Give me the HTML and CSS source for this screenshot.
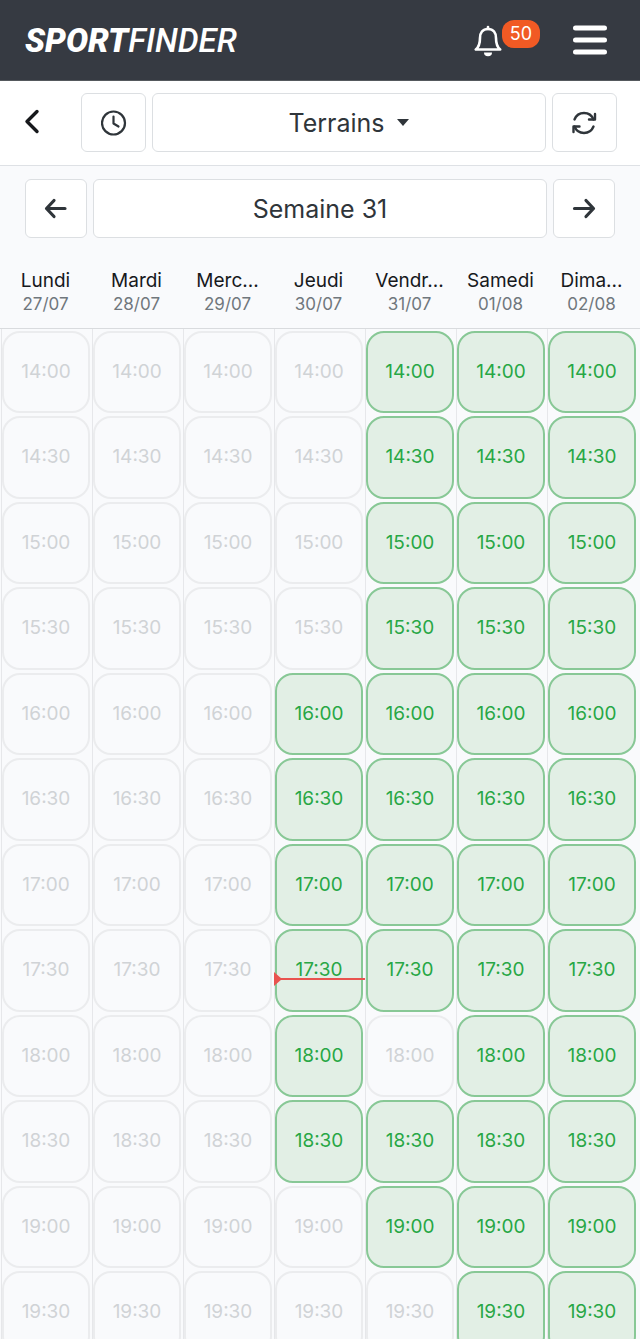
FILE: index.html
```html
<!DOCTYPE html>
<html lang="fr">
<head>
  <meta charset="UTF-8">
  <meta name="viewport" content="width=device-width, initial-scale=1.0">
  <title>SportFinder</title>
  <link rel="stylesheet" href="styles.css">
</head>
<body>
  <header class="navbar">
    <a href="#" class="logo"><strong>SPORT</strong>FINDER</a>
    <div class="navbar-actions">
      <button type="button" class="bell-btn" aria-label="Notifications">
        <svg width="28" height="32" viewBox="0 0 28 32" fill="none" stroke="#fff" stroke-width="2.6" stroke-linecap="round" stroke-linejoin="round">
          <path d="M14 4C8.500 4 6 8 6 13C6 18 5 22 1.800 24.500H26.200C23 22 22 18 22 13C22 8 19.500 4 14 4Z"/>
          <path d="M14 2V4"/>
          <path d="M10 27.500H18A4 3.800 0 0 1 10 27.500Z" fill="#fff" stroke="none"/>
        </svg>
        <span class="badge">50</span>
      </button>
      <button type="button" class="menu-btn" aria-label="Menu">
        <svg width="36" height="32" viewBox="0 0 36 32" stroke="#fff" stroke-width="5" stroke-linecap="round">
          <path d="M3.500 4H32.500M3.500 16H32.500M3.500 28H32.500"/>
        </svg>
      </button>
    </div>
  </header>

  <div class="toolbar">
    <a href="#" class="back-link" aria-label="Retour">
      <svg width="16" height="28" viewBox="0 0 16 28" fill="none" stroke="#17191c" stroke-width="3.400" stroke-linecap="round" stroke-linejoin="round">
        <path d="M13 2.500L3 12.500L13 22.500"/>
      </svg>
    </a>
    <button type="button" class="box icon-box" aria-label="Horaires">
      <svg width="26" height="26" viewBox="0 0 26 26" fill="none" stroke="#2f353a" stroke-width="2.200" stroke-linecap="round" stroke-linejoin="round">
        <circle cx="12.500" cy="13" r="11.500"/>
        <path d="M12.500 6.500V13.500L17.500 16.500"/>
      </svg>
    </button>
    <select class="box courts" aria-label="Terrains">
      <option>Terrains</option>
    </select>
    <button type="button" class="box icon-box" aria-label="Actualiser">
      <svg width="26" height="26" viewBox="0 0 26 26" fill="none" stroke="#2f353a" stroke-width="2.400" stroke-linecap="round" stroke-linejoin="round">
        <path d="M2.500 9.500A10.200 10.200 0 0 1 21.500 9.500"/>
        <path d="M23 4V9.500H17"/>
        <path d="M21.500 16.500A10.200 10.200 0 0 1 2.500 16.500"/>
        <path d="M1.500 22V16.500H7.500"/>
      </svg>
    </button>
  </div>

  <main class="calendar">
    <div class="week-nav">
      <button type="button" class="box icon-box" aria-label="Semaine précédente">
        <svg width="24" height="24" viewBox="0 0 24 24" fill="none" stroke="#2f353a" stroke-width="3.200" stroke-linecap="round" stroke-linejoin="round">
          <path d="M21 11.500H2.500M10 3.500L2.500 11.500L10 19.500"/>
        </svg>
      </button>
      <button type="button" class="box week">Semaine 31</button>
      <button type="button" class="box icon-box" aria-label="Semaine suivante">
        <svg width="24" height="24" viewBox="0 0 24 24" fill="none" stroke="#2f353a" stroke-width="3.200" stroke-linecap="round" stroke-linejoin="round">
          <path d="M2.500 11.500H21.500M14 3.500L21.500 11.500L14 19.500"/>
        </svg>
      </button>
    </div>
    <div class="days" id="days"></div>
    <div class="slots" id="slots"></div>
  </main>

  <script>
    // first: first free half hour of the day, last: last one, full: booked in between
    const days = [
      { name: 'Lundi', date: '27/07' },
      { name: 'Mardi', date: '28/07' },
      { name: 'Merc...', date: '29/07' },
      { name: 'Jeudi', date: '30/07', first: 4, last: 9 },
      { name: 'Vendr...', date: '31/07', first: 0, last: 10, full: 8 },
      { name: 'Samedi', date: '01/08', first: 0, last: 11 },
      { name: 'Dima...', date: '02/08', first: 0, last: 11 }
    ];
    const startHour = 14;
    const slotCount = 12;
    const now = { day: 3, minutes: 228 };

    const daysRow = document.getElementById('days');
    const slotsGrid = document.getElementById('slots');

    days.forEach((day, index) => {
      const head = document.createElement('div');
      head.className = 'day';
      head.innerHTML = `<div class="day-name">${day.name}</div><div class="day-date">${day.date}</div>`;
      daysRow.appendChild(head);

      const column = document.createElement('div');
      column.className = 'column';
      for (let i = 0; i < slotCount; i++) {
        const slot = document.createElement('button');
        const free = i >= day.first && i <= day.last && i !== day.full;
        slot.type = 'button';
        slot.className = free ? 'slot free' : 'slot';
        slot.disabled = !free;
        slot.textContent = `${startHour + Math.floor(i / 2)}:${i % 2 ? '30' : '00'}`;
        column.appendChild(slot);
      }

      // Current time marker
      if (index === now.day) {
        const line = document.createElement('div');
        line.className = 'now-line';
        line.style.top = `${Math.round(now.minutes * 171 / 60)}px`;
        column.appendChild(line);
      }
      slotsGrid.appendChild(column);
    });
  </script>
</body>
</html>
```
FILE: styles.css
```css
* {
  box-sizing: border-box;
}
body {
  font-family: Inter, "Liberation Sans", sans-serif;
  background-color: #f9fafc;
  color: #2f353a;
  margin: 0;
  height: 100vh;
  overflow: hidden;
  display: flex;
  flex-direction: column;
}
button, select {
  font-family: inherit;
  color: inherit;
  margin: 0;
  padding: 0;
  border: none;
  background: none;
  cursor: pointer;
}
svg {
  display: block;
}
.navbar {
  flex: none;
  display: flex;
  justify-content: space-between;
  align-items: center;
  height: 81px;
  padding: 0 32px 0 25px;
  background-color: #363a42;
  border-bottom: 1px solid #55595d;
}
.logo {
  font-family: Roboto, "Liberation Sans", sans-serif;
  font-size: 33px;
  font-style: italic;
  font-weight: 500;
  color: #fff;
  text-decoration: none;
}
.logo strong {
  font-weight: 900;
}
.navbar-actions {
  display: flex;
  align-items: center;
  gap: 32px;
}
.bell-btn {
  display: flex;
  align-items: flex-start;
  padding-bottom: 4px;
}
.bell-btn svg {
  margin-top: 5px;
}
.badge {
  height: 28px;
  padding: 0 8px;
  border-radius: 12px;
  background-color: #f15a24;
  color: #fff;
  font-size: 18px;
  line-height: 28px;
}
.toolbar {
  flex: none;
  display: flex;
  align-items: center;
  gap: 6px;
  padding: 12px 23px 13px 24px;
  background-color: #fff;
  border-bottom: 1px solid #dee1e5;
}
.back-link {
  width: 51px;
}
.box {
  height: 59px;
  border: 1px solid #dcdfe2;
  border-radius: 6px;
  background-color: #fff;
  font-size: 25px;
}
.icon-box {
  flex: none;
  display: flex;
  justify-content: center;
  align-items: center;
  width: 65px;
}
.courts {
  flex: 1;
  min-width: 0;
  padding-right: 25px;
  appearance: none;
  text-align: center;
  text-align-last: center;
  background-image: url("data:image/svg+xml,%3Csvg xmlns='http://www.w3.org/2000/svg' width='12' height='7'%3E%3Cpath d='M0 0H12L6 7Z' fill='%232f353a'/%3E%3C/svg%3E");
  background-repeat: no-repeat;
  background-position: calc(50% + 54px) 50%;
}
.calendar {
  flex: 1;
  min-height: 0;
  overflow: hidden;
}
.week-nav {
  display: flex;
  gap: 6px;
  padding: 13px 25px 0;
}
.week-nav .icon-box {
  width: 62px;
}
.week {
  flex: 1;
}
.days, .slots {
  display: grid;
  grid-template-columns: repeat(7, minmax(0, 1fr));
  padding: 0 2px 0 1px;
}
.days {
  padding-top: 31px;
  padding-bottom: 13px;
  border-bottom: 1px solid #d9dbde;
}
.day {
  padding-right: 2px;
  text-align: center;
}
.day-name {
  color: #17191c;
  font-size: 19px;
  line-height: 24px;
}
.day-date {
  color: #70777d;
  font-size: 17px;
  line-height: 22px;
}
.column {
  position: relative;
  display: grid;
  grid-auto-rows: 85px 86px;
  border-left: 1px solid #e6e7ea;
}
.slot {
  margin: 2px 2px 1px 0;
  padding-bottom: 2px;
  border: 2px solid #ebecee;
  border-radius: 18px;
  color: #d0d3d6;
  font-size: 19px;
}
.slot:disabled {
  cursor: default;
}
.slot.free {
  border-color: #88c896;
  background-color: #e2efe5;
  color: #28a745;
}
.now-line {
  position: absolute;
  left: 0;
  right: 0;
  height: 2px;
  margin-top: -1px;
  background-color: #e9534f;
}
.now-line::before {
  content: "";
  position: absolute;
  left: -1px;
  top: -6px;
  border: 7px solid transparent;
  border-left: 8px solid #e9534f;
  border-right: 0;
}
```
